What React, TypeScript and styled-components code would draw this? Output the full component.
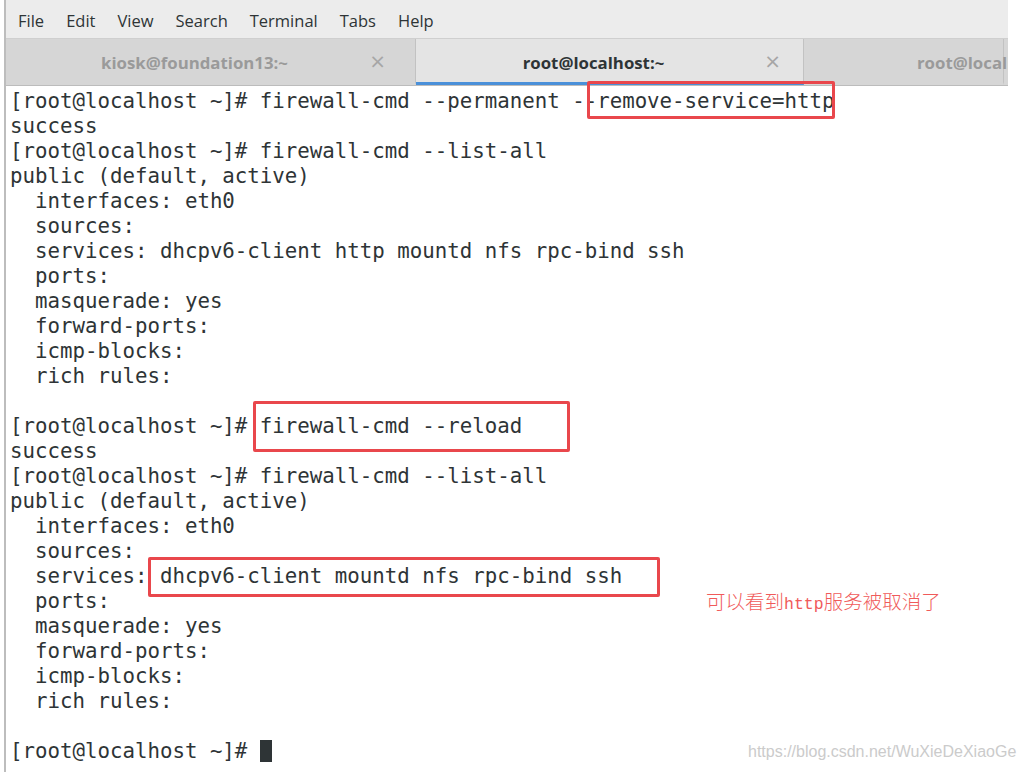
import { FC } from "react";
import styled, { createGlobalStyle } from "styled-components";

const GlobalStyle = createGlobalStyle`
  html, body {
    margin: 0;
    padding: 0;
    background: #ffffff;
  }
  body {
    width: 1025px;
    height: 772px;
    overflow: hidden;
  }
`;

const MENU = ["File", "Edit", "View", "Search", "Terminal", "Tabs", "Help"];

const BLOCK = [
  "[root@localhost ~]# firewall-cmd --list-all",
  "public (default, active)",
  "  interfaces: eth0",
  "  sources:",
];

const TAIL = [
  "  ports:",
  "  masquerade: yes",
  "  forward-ports:",
  "  icmp-blocks:",
  "  rich rules:",
  "",
];

const LINES = [
  "[root@localhost ~]# firewall-cmd --permanent --remove-service=http",
  "success",
  ...BLOCK,
  "  services: dhcpv6-client http mountd nfs rpc-bind ssh",
  ...TAIL,
  "[root@localhost ~]# firewall-cmd --reload",
  "success",
  ...BLOCK,
  "  services: dhcpv6-client mountd nfs rpc-bind ssh",
  ...TAIL,
];

type Box = { left: number; top: number; width: number; height: number };

// red highlight frames drawn over the screenshot
const BOXES: Box[] = [
  { left: 587, top: 81, width: 248, height: 38 },
  { left: 253, top: 401, width: 317, height: 51 },
  { left: 148, top: 557, width: 512, height: 40 },
];

const App: FC = () => {
  return (
    <>
      <GlobalStyle />
      <SPage>
        <SWindow>
          <SMenuBar>
            {MENU.map((m) => (
              <SMenuItem key={m}>{m}</SMenuItem>
            ))}
          </SMenuBar>
          <STabBar>
            <STab $width={410}>
              <STabLabel>kiosk@foundation13:~</STabLabel>
              <SClose $right={29}>×</SClose>
            </STab>
            <STab $width={388} $active>
              <STabLabel $active>root@localhost:~</STabLabel>
              <SClose $right={22}>×</SClose>
            </STab>
            <STab $width={200} $clip>
              <STabLabel>root@localhost:~</STabLabel>
            </STab>
          </STabBar>
          <STerminal>
            {LINES.map((l, i) => (
              <SLine key={i}>{l}</SLine>
            ))}
            <SLine>
              {"[root@localhost ~]# "}
              <SCursor />
            </SLine>
          </STerminal>
        </SWindow>

        {BOXES.map((b, i) => (
          <SRedBox
            key={i}
            style={{ left: b.left, top: b.top, width: b.width, height: b.height }}
          />
        ))}
        <SNote>
          可以看到<SNoteMono>http</SNoteMono>服务被取消了
        </SNote>
        <SWatermark>https://blog.csdn.net/WuXieDeXiaoGe</SWatermark>
      </SPage>
    </>
  );
};

export default App;

const SPage = styled.div`
  position: relative;
  width: 1025px;
  height: 772px;
  background: #ffffff;
  overflow: hidden;
`;

const SWindow = styled.div`
  display: flex;
  flex-direction: column;
  width: 1004px;
  height: 772px;
  border-left: 2px solid #bdbdbd;
  margin-left: 4px;
  box-sizing: border-box;
`;

const SMenuBar = styled.div`
  display: flex;
  align-items: center;
  height: 38px;
  padding: 3px 0 0 1px;
  box-sizing: border-box;
  background: #ececec;
  font-family: "Open Sans", "Noto Sans", sans-serif;
  font-size: 16.5px;
  color: #2e3436;
`;

const SMenuItem = styled.span`
  padding: 0 11px;
`;

const STabBar = styled.div`
  display: flex;
  height: 48px;
  border-top: 1px solid #cfcfcf;
  border-bottom: 1px solid #bcbcbc;
  box-sizing: border-box;
  background: #d6d6d6;
  overflow: hidden;
`;

const STab = styled.div<{ $width: number; $active?: boolean; $clip?: boolean }>`
  position: relative;
  display: flex;
  align-items: center;
  justify-content: ${(p) => (p.$clip ? "flex-start" : "center")};
  flex: none;
  width: ${(p) => p.$width}px;
  padding: ${(p) => (p.$clip ? "0 0 0 113px" : "0 32px 0 0")};
  box-sizing: border-box;
  background: ${(p) => (p.$active ? "#e4e4e4" : "#d6d6d6")};
  border-right: 1px solid #c2c2c2;
  border-bottom: 3px solid ${(p) => (p.$active ? "#4a90d9" : "transparent")};
  white-space: nowrap;
  font-family: "Open Sans", "Noto Sans", sans-serif;
  font-weight: 700;
  font-size: 16.8px;
`;

const STabLabel = styled.span<{ $active?: boolean }>`
  color: ${(p) => (p.$active ? "#2e3436" : "#9a9a9a")};
  margin-top: 3px;
`;

const SClose = styled.span<{ $right: number }>`
  position: absolute;
  right: ${(p) => p.$right}px;
  top: 50%;
  transform: translateY(-50%);
  font-family: "DejaVu Sans", sans-serif;
  font-weight: 400;
  font-size: 20px;
  color: #a6a6a6;
`;

const STerminal = styled.div`
  flex: 1;
  padding: 3px 0 0 4px;
  background: #ffffff;
  font-family: "DejaVu Sans Mono", monospace;
  font-size: 20.76px;
  color: #2e3436;
`;

const SLine = styled.div`
  height: 25px;
  line-height: 25px;
  white-space: pre;
`;

const SCursor = styled.span`
  display: inline-block;
  width: 12px;
  height: 22px;
  vertical-align: -4px;
  background: #2e3436;
`;

const SRedBox = styled.div`
  position: absolute;
  border: 3px solid #e9474c;
  border-radius: 2px;
  box-sizing: border-box;
`;

const SNote = styled.div`
  position: absolute;
  left: 706px;
  top: 589px;
  font-family: "Noto Sans CJK SC", sans-serif;
  font-weight: 300;
  font-size: 19.5px;
  line-height: 24px;
  color: #f05a5a;
  white-space: nowrap;
`;

const SNoteMono = styled.span`
  font-family: "Liberation Mono", monospace;
  font-size: 16.5px;
`;

const SWatermark = styled.div`
  position: absolute;
  left: 748px;
  top: 742px;
  font-family: "Liberation Sans", sans-serif;
  font-size: 16px;
  line-height: 20px;
  color: #cbcbcb;
  white-space: nowrap;
`;
